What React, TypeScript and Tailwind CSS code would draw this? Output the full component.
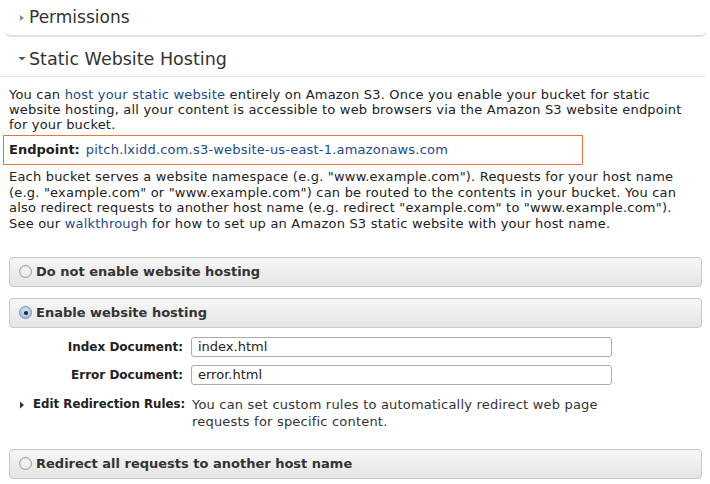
import React from "react";

const RadioPanel = ({ label, checked }: { label: string; checked?: boolean }) => {
  return (
    <div className="ml-[9px] mr-[8px] h-[30px] flex items-center rounded-[4px] border border-[#c8c8c8] bg-gradient-to-b from-[#f7f7f7] to-[#e4e4e4] pl-[9px]">
      <span
        className={`shrink-0 w-[13px] h-[13px] rounded-full border flex items-center justify-center shadow-[inset_0_1px_2px_rgba(0,0,0,0.15)] ${
          checked ? "bg-gradient-to-b from-[#d4e6f8] to-[#9cc4ec] border-[#6d8fb4]" : "bg-gradient-to-b from-[#fdfdfd] to-[#e6e6e6] border-[#9a9a9a]"
        }`}
      >
        {checked && <span className="w-[4px] h-[4px] rounded-full bg-[#222]" />}
      </span>
      <span className="ml-[4px] text-[13px] font-bold text-[#333]">{label}</span>
    </div>
  );
};

const App = () => {
  return (
    <div className="w-[710px] h-[484px] overflow-hidden bg-white text-[#222] font-['DejaVu_Sans',Verdana,sans-serif]">
      {/* Permissions */}
      <div className="ml-[4px] mr-[3px] h-[37px] flex items-center border-b-2 border-[#e2e2e2] rounded-b-[7px] pl-[15px]">
        <svg width="6" height="8" viewBox="0 0 6 8" className="shrink-0 mr-[4px]">
          <path d="M1 1 L5 4 L1 7 Z" fill="#8a8a8a" />
        </svg>
        <span className="text-[17px] text-[#333]">Permissions</span>
      </div>

      {/* Static Website Hosting */}
      <div className="h-[40px] flex items-center border-b border-[#e6e6e6] pl-[18px] pt-[5px] mr-[4px]">
        <svg width="8" height="6" viewBox="0 0 8 6" className="shrink-0 mr-[3px]">
          <path d="M0.5 1 L7.5 1 L4 4.5 Z" fill="#555" />
        </svg>
        <span className="text-[17.5px] text-[#333]">Static Website Hosting</span>
      </div>

      <div className="px-[9px] pt-[10px] text-[13px] leading-[15px] tracking-[0.2px]">
        You can <span className="text-[#1d4a8a]">host your static website</span> entirely on Amazon S3. Once you enable your bucket for static website hosting, all your content is accessible to web browsers via the Amazon S3 website endpoint for your bucket.
      </div>

      <div className="mt-[3px] ml-[3px] w-[580px] h-[30px] border border-[#e8773f] flex items-center pl-[5px] text-[13px]">
        <span className="font-bold text-[#222]">Endpoint:</span>
        <span className="ml-[6px] text-[#1d4a8a] tracking-[0.2px]">pitch.lxidd.com.s3-website-us-east-1.amazonaws.com</span>
      </div>

      <div className="pl-[9px] pr-[29px] pt-[4px] text-[13px] leading-[15.7px] tracking-[0.2px]">
        Each bucket serves a website namespace (e.g. "www.example.com"). Requests for your host name (e.g. "example.com" or "www.example.com") can be routed to the contents in your bucket. You can also redirect requests to another host name (e.g. redirect "example.com" to "www.example.com"). See our <span className="text-[#1d4a8a]">walkthrough</span> for how to set up an Amazon S3 static website with your host name.
      </div>

      <div className="mt-[25px] flex flex-col gap-[11px]">
        <RadioPanel label="Do not enable website hosting" />
        <RadioPanel label="Enable website hosting" checked />
      </div>

      <div className="mt-[9px] flex flex-col gap-[8px] text-[13px]">
        <div className="flex items-center">
          <span className="w-[183px] text-right text-[12px] font-bold text-[#222]">Index Document:</span>
          <div className="ml-[8px] w-[421px] h-[20px] border border-[#aaa] rounded-[3px] flex items-center pl-[6px] text-[#222]">index.html</div>
        </div>
        <div className="flex items-center">
          <span className="w-[183px] text-right text-[12px] font-bold text-[#222]">Error Document:</span>
          <div className="ml-[8px] w-[421px] h-[20px] border border-[#aaa] rounded-[3px] flex items-center pl-[6px] text-[#222]">error.html</div>
        </div>
      </div>

      <div className="mt-[11px] flex text-[13px] leading-[17px]">
        <div className="w-[183px] shrink-0 flex items-start pl-[19px]">
          <svg width="6" height="8" viewBox="0 0 6 8" className="shrink-0 mt-[5px] mr-[8px]">
            <path d="M1 0.5 L5 4 L1 7.5 Z" fill="#333" />
          </svg>
          <span className="text-[11.8px] font-bold text-[#222] whitespace-nowrap">Edit Redirection Rules:</span>
        </div>
        <div className="ml-[9px] w-[420px] text-[#333] tracking-[0.2px]">
          You can set custom rules to automatically redirect web page requests for specific content.
        </div>
      </div>

      <div className="mt-[19px]">
        <RadioPanel label="Redirect all requests to another host name" />
      </div>
    </div>
  );
};

export default App;
